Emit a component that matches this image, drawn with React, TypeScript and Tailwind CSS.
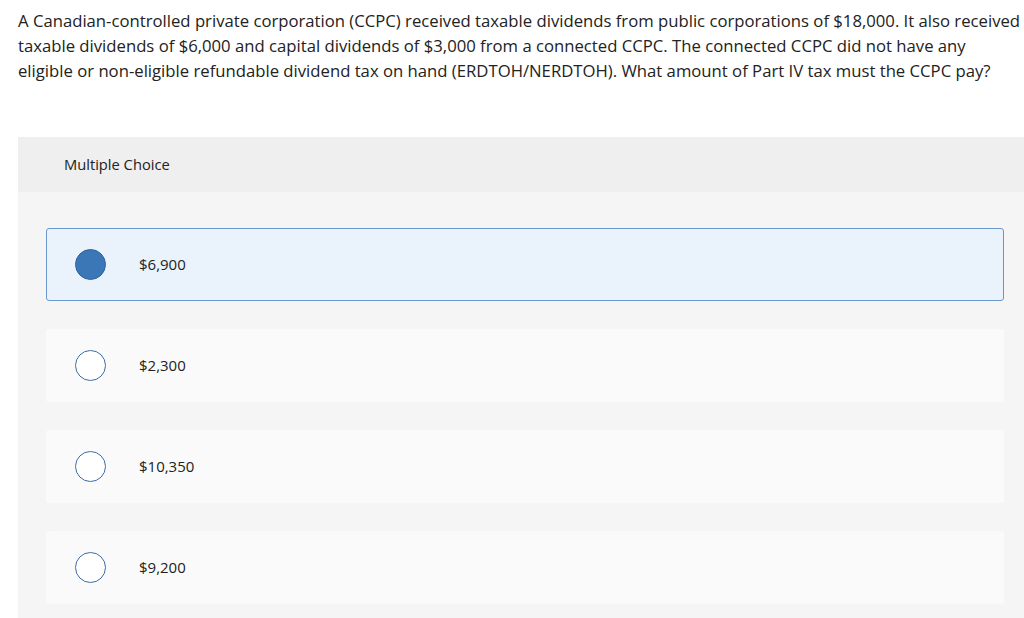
const options = [
  { label: '$6,900', selected: true },
  { label: '$2,300', selected: false },
  { label: '$10,350', selected: false },
  { label: '$9,200', selected: false },
];

export default function App() {
  return (
    <div className="w-[1024px] h-[618px] overflow-hidden bg-white text-[#333] font-['Open_Sans','Liberation_Sans',sans-serif]">
      <p className="pl-[18px] pt-[8px] text-[16.7px] leading-[25px] whitespace-nowrap text-[#222]">
        A Canadian-controlled private corporation (CCPC) received taxable dividends from public corporations of $18,000. It also received
        <br />
        taxable dividends of $6,000 and capital dividends of $3,000 from a connected CCPC. The connected CCPC did not have any
        <br />
        eligible or non-eligible refundable dividend tax on hand (ERDTOH/NERDTOH). What amount of Part IV tax must the CCPC pay?
      </p>

      <div className="ml-[18px] mt-[54px] w-[1014px] bg-[#f5f5f5]">
        <div className="h-[55px] bg-[#efefef] pl-[46px] flex items-center text-[14.7px] text-[#222]">Multiple Choice</div>
        <div className="pl-[28px] pr-[28px] pt-[36px] pb-[20px] flex flex-col gap-[28px]">
          {options.map((o) => (
            <div
              key={o.label}
              className={`h-[73px] flex items-center rounded-[3px] ${
                o.selected ? 'bg-[#eaf2fc] border border-[#6b98cc]' : 'bg-[#fafafa] border border-transparent'
              }`}
            >
              <div className="w-[86px] flex justify-center">
                <span
                  className={`w-[31px] h-[31px] rounded-full border-[1.5px] ${
                    o.selected ? 'bg-[#3b76b6] border-[#2f64a0]' : 'bg-white border-[#3b6ea5]'
                  }`}
                />
              </div>
              <span className="pl-[6px] text-[15px] text-[#222]">{o.label}</span>
            </div>
          ))}
        </div>
      </div>
    </div>
  );
}
